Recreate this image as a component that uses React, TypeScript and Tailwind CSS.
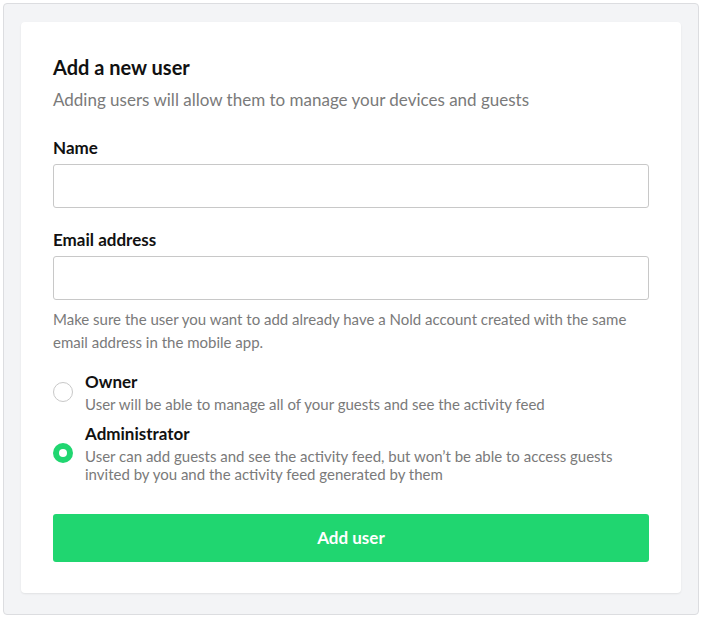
import React from "react";

function Radio({ checked }: { checked: boolean }) {
  return checked ? (
    <span className="flex h-5 w-5 shrink-0 items-center justify-center rounded-full bg-[#20d670]">
      <span className="h-2 w-2 rounded-full bg-white" />
    </span>
  ) : (
    <span className="h-5 w-5 shrink-0 rounded-full border border-[#c8c8c8] bg-white" />
  );
}

export default function App() {
  return (
    <div className="min-h-[620px] bg-white p-[3px]" style={{ fontFamily: "Lato, 'Open Sans', sans-serif" }}>
      <div className="w-[696px] rounded-[4px] border border-[#dcdde0] bg-[#f3f4f6] px-[17px] pt-[18px] pb-[21px]">
        <div className="rounded-[4px] bg-white px-8 pt-8 pb-[31px] shadow-[0_1px_2px_rgba(0,0,0,0.08)]">
          <h1 className="text-[20px] font-bold leading-[26px] text-[#111]">Add a new user</h1>
          <p className="mt-2 text-[17px] leading-6 text-[#7a7a7a]">
            Adding users will allow them to manage your devices and guests
          </p>

          <label className="mt-6 block text-[17px] font-bold leading-6 text-[#111]">Name</label>
          <input className="mt-1 block h-[44px] w-full rounded-[3px] border border-[#c8c8c8] bg-white px-3 outline-none" />

          <label className="mt-5 block text-[17px] font-bold leading-6 text-[#111]">Email address</label>
          <input className="mt-1 block h-[44px] w-full rounded-[3px] border border-[#c8c8c8] bg-white px-3 outline-none" />

          <p className="mt-2 text-[15px] leading-[23px] text-[#7a7a7a]">
            Make sure the user you want to add already have a Nold account created with the same email address in the mobile app.
          </p>

          <div className="mt-[17px] flex items-center gap-3">
            <Radio checked={false} />
            <div>
              <div className="text-[17px] font-bold leading-[22px] text-[#111]">Owner</div>
              <div className="mt-[2px] text-[15px] leading-[18px] text-[#7a7a7a]">
                User will be able to manage all of your guests and see the activity feed
              </div>
            </div>
          </div>

          <div className="mt-[10px] flex items-center gap-3">
            <Radio checked={true} />
            <div>
              <div className="text-[17px] font-bold leading-[22px] text-[#111]">Administrator</div>
              <div className="mt-[2px] text-[15px] leading-[18px] text-[#7a7a7a]">
                User can add guests and see the activity feed, but won’t be able to access guests invited by you and the activity feed generated by them
              </div>
            </div>
          </div>

          <button className="mt-[31px] block h-12 w-full rounded-[3px] bg-[#20d670] text-[17px] font-bold text-white">
            Add user
          </button>
        </div>
      </div>
    </div>
  );
}
